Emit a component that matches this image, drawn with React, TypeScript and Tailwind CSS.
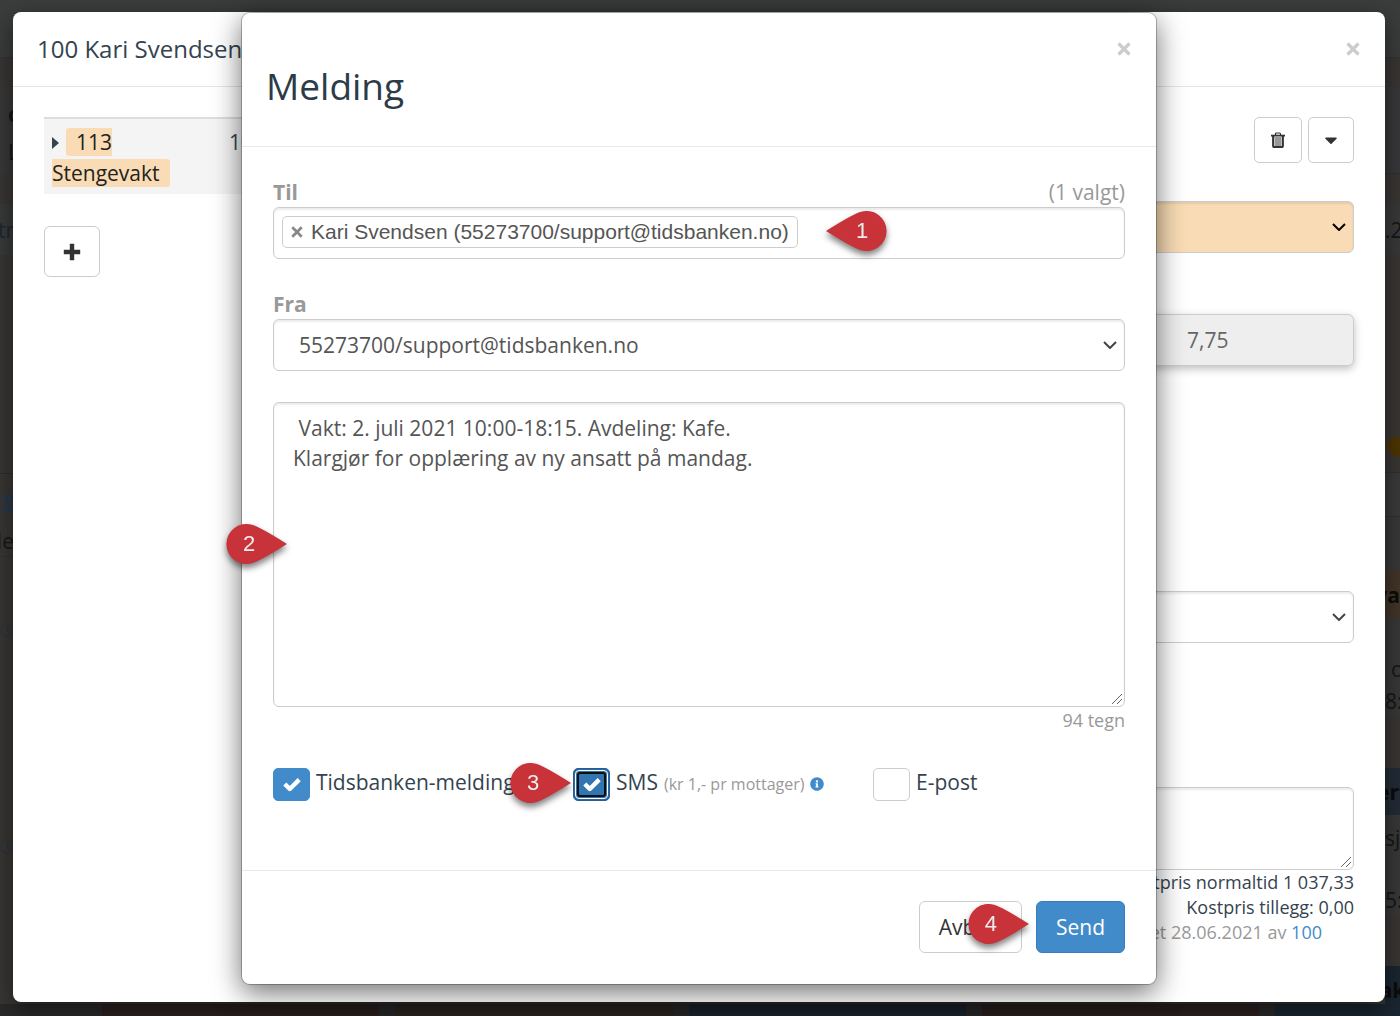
import { useState, type ReactNode } from "react";
import { FaCaretDown, FaInfoCircle, FaRegClock } from "react-icons/fa";

const inputStyle =
  "w-full rounded-md border border-[#ccc] bg-white text-[21px] leading-[30px] text-[#555] shadow-[inset_0_2px_2px_rgba(0,0,0,0.075)] outline-none";

const Chevron = ({ className }: { className: string }) => (
  <svg
    className={`pointer-events-none absolute right-2 top-1/2 h-2 w-3.5 -translate-y-1/2 ${className}`}
    viewBox="0 0 14 8"
    fill="none"
    stroke="currentColor"
    strokeWidth={2}
  >
    <path d="M1 1l6 6 6-6" />
  </svg>
);

const Grip = () => (
  <svg
    className="pointer-events-none absolute bottom-0.5 right-0.5 h-3 w-3"
    viewBox="0 0 12 12"
    fill="none"
    stroke="#666"
    strokeWidth={1}
  >
    <path d="M1 11L11 1M6 11l5-5" />
  </svg>
);

const CrossIcon = ({ className }: { className: string }) => (
  <svg className={className} viewBox="0 0 14 14" stroke="currentColor" strokeWidth={3.2}>
    <path d="M1.500 1.500l11 11M12.500 1.500l-11 11" />
  </svg>
);

const CheckIcon = () => (
  <svg
    className="pointer-events-none absolute inset-0 m-auto h-[15px] w-[18px] text-white"
    viewBox="0 0 18 15"
    fill="none"
    stroke="currentColor"
    strokeWidth={4.4}
    strokeLinejoin="round"
  >
    <path d="M1.800 7l5 5L16.200 2.600" />
  </svg>
);

const PlusIcon = () => (
  <svg className="h-[18px] w-[18px]" viewBox="0 0 18 18" stroke="currentColor" strokeWidth={4.4}>
    <path d="M9 .8v16.400M.8 9h16.400" strokeLinejoin="round" />
  </svg>
);

const TrashIcon = () => (
  <svg className="h-4 w-3.5" viewBox="0 0 14 16" fill="none" stroke="currentColor">
    <path d="M4.500 3V2q0-1 1-1h3q1 0 1 1v1" strokeWidth={1.2} />
    <path d="M0 3.600h14" strokeWidth={1.8} />
    <path d="M2.200 4v10q0 1 1 1h7.600q1 0 1-1V4" strokeWidth={2.2} />
    <path d="M5 5v9M7 5v9M9 5v9" strokeWidth={1} />
  </svg>
);

type PinProps = { label: string; direction: "left" | "right"; className: string };

// Numbered marker pointing at a field
const Pin = ({ label, direction, className }: PinProps) => (
  <span
    className={`pointer-events-none absolute z-10 flex h-10 w-[62px] items-center drop-shadow-[0_4px_3px_rgba(0,0,0,0.5)] ${className}`}
  >
    <svg className="absolute inset-0 h-full w-full" viewBox="0 0 62 40" fill="#c83239">
      {direction === "left" ? (
        <path d="M0 20Q27 3 35 0.8A20 20 0 1 1 35 39.2Q27 37 0 20z" />
      ) : (
        <path d="M62 20Q35 3 27 0.8A20 20 0 1 0 27 39.2Q35 37 62 20z" />
      )}
    </svg>
    <span
      className={`relative w-12 text-center font-['Liberation_Sans',sans-serif] text-[22px] leading-6 font-normal text-[#eee] ${
        direction === "left" ? "ml-3" : ""
      }`}
    >
      {label}
    </span>
  </span>
);

type CheckProps = {
  id: string;
  label: string;
  initial?: boolean;
  focused?: boolean;
  children?: ReactNode;
};

const CheckOption = ({ id, label, initial = false, focused = false, children }: CheckProps) => {
  const [checked, setChecked] = useState(initial);
  const box = !checked
    ? "border-[#ccc] bg-white"
    : focused
      ? "border-[#285e8e] bg-[#3276b1] ring-2 ring-[#2b68a5] ring-inset"
      : "border-[#428bca] bg-[#428bca]";

  return (
    <div className="relative flex items-center gap-1.5 whitespace-nowrap">
      <span className="relative flex h-[33px] w-[37px] shrink-0">
        <input
          id={id}
          type="checkbox"
          checked={checked}
          onChange={(e) => setChecked(e.target.checked)}
          className={`h-full w-full appearance-none rounded-[5px] border outline-none ${box}`}
        />
        {focused && (
          <span className="pointer-events-none absolute inset-[2px] rounded-[4px] border border-white p-px">
            <span className="block h-full w-full rounded-[3px] border-2 border-[#101010]" />
          </span>
        )}
        {checked && <CheckIcon />}
      </span>
      <label htmlFor={id} className="pb-1 text-[21px] leading-[30px] text-[#34434f]">
        {label}
      </label>
      {children}
    </div>
  );
};

// Dimmed schedule behind the dialogs
const Backdrop = () => (
  <div
    aria-hidden="true"
    className="absolute inset-0 flex flex-col overflow-hidden bg-[#393634] text-[21px] leading-[30px] text-[#161616]"
  >
    <div className="h-[58px] shrink-0 border-b border-[#333] bg-[#3a3d3b]" />
    <div className="flex min-h-0 flex-1 justify-between">
      <div className="flex w-3.5 flex-col items-end overflow-hidden">
        <div className="mt-[29px] flex h-[87px] w-full shrink-0 flex-col items-start gap-2 bg-[#393838] pl-2 pt-3">
          <b>c</b>
          <span>L</span>
        </div>
        <div className="mt-[30px] flex h-[51px] w-full shrink-0 items-center justify-end bg-[#393a3a] text-[#1a2733]">
          tr
        </div>
        <div className="mt-[218px] flex w-full shrink-0 justify-end border-t border-[#2f2d2c] pt-2.5 text-[#1b3b58]">
          g
        </div>
        <div className="mt-3 flex w-full shrink-0 justify-end border-b border-[#343230]">de</div>
        <FaRegClock className="mt-[66px] h-3.5 w-3.5 shrink-0 text-[#2d353b]" />
        <FaRegClock className="mt-[203px] h-3.5 w-3.5 shrink-0 text-[#2d353b]" />
      </div>
      <div className="flex w-[15px] flex-col overflow-hidden">
        <div className="mt-[29px] h-[87px] shrink-0 border-b border-[#303030] bg-[#38383a]" />
        <div className="mt-[30px] flex h-[51px] shrink-0 items-center bg-[#39393a]">.2</div>
        <svg className="mt-[179px] h-6 w-6 shrink-0" viewBox="0 0 24 24" fill="#4c3500">
          <path d="M12 0l2 4 4-2.500.5 4.500 4.500.5L20.500 11 24 14l-4 1.500 1 4.500-4.500-.5L14 24l-3-3.500L7 23l-.5-4.500L2 17l2.500-3.500L0 11l4.500-2L3 4.500l4.500.5z" />
        </svg>
        <div className="mt-[14px] h-[45px] shrink-0 border-y border-[#303030] bg-[#3a3a3a]" />
        <div className="h-[54px] shrink-0 bg-[#383838]" />
        <div className="flex h-[47px] shrink-0 items-center justify-end bg-[#423528] font-bold text-[#0c0c0c]">
          va
        </div>
        <div className="flex h-[100px] shrink-0 flex-col bg-[#383838] pt-9">
          <span className="ml-1.5 h-8 shrink-0">o</span>
          <span>8:</span>
        </div>
        <div className="mt-[50px] flex h-[47px] shrink-0 items-center justify-center bg-[#222c36] font-bold text-[#0c0c0c]">
          ert
        </div>
        <div className="flex h-[100px] shrink-0 flex-col bg-[#383838] pt-2">
          <span className="h-[62px] shrink-0">sj</span>
          <span>5:</span>
        </div>
        <div className="mt-[51px] flex h-[47px] shrink-0 items-center justify-center bg-[#1a2631] font-bold text-[#0c0c0c]">
          ak
        </div>
      </div>
    </div>
    <div className="flex h-3 shrink-0 gap-4 bg-[#292a29] pl-[102px]">
      <div className="flex-1 bg-[#2c2120]" />
      <div className="flex-1 bg-[#2d261f]" />
      <div className="flex-1 bg-[#1b2530]" />
      <div className="flex-1 bg-[#2c2120]" />
      <div className="w-[125px] bg-[#1a2631]" />
    </div>
  </div>
);

const ShiftDialog = () => (
  <section className="flex flex-col rounded-lg bg-white shadow-[0_8px_23px_rgba(0,0,0,0.5)] [grid-area:1/1]">
    <header className="flex h-[75px] items-center justify-between border-b border-[#e5e5e5] pl-6 pr-[25px]">
      <h2 className="text-[24px] leading-9 text-[#34434f]">100 Kari Svendsen</h2>
      <button type="button" aria-label="Lukk vakt" className="text-[#ccc]">
        <CrossIcon className="h-3.5 w-3.5" />
      </button>
    </header>
    <div className="flex justify-between px-[31px] pt-[30px]">
      <div className="w-[300px]">
        <div className="flex border-t-2 border-[#ddd] bg-[#f4f4f4] px-2 pb-[5px] pt-2 text-[21px] leading-[31px] text-[#34434f]">
          <div className="w-[177px] shrink-0">
            <svg className="mr-1.5 inline h-3 w-2 align-[1px]" viewBox="0 0 8 12" fill="currentColor">
              <path d="M0 0l7 6-7 6z" />
            </svg>
            <span className="rounded-[3px] bg-[#f9dcb5] px-2.5 text-[#222]">
              113 <br />
              Stengevakt
            </span>
          </div>
          <span>10:00</span>
        </div>
        <button
          type="button"
          aria-label="Legg til"
          className="mt-8 flex h-[51px] w-14 items-center justify-center rounded-md border border-[#ccc] text-[#333]"
        >
          <PlusIcon />
        </button>
      </div>
      <div className="flex w-[300px] flex-col">
        <div className="flex justify-end gap-1.5 text-[#333]">
          <button
            type="button"
            aria-label="Slett"
            className="flex h-[46px] w-12 items-center justify-center rounded-[5px] border border-[#ccc]"
          >
            <TrashIcon />
          </button>
          <button
            type="button"
            aria-label="Flere valg"
            className="flex h-[46px] w-[46px] items-center justify-center rounded-[5px] border border-[#ccc]"
          >
            <FaCaretDown className="h-5 w-5" />
          </button>
        </div>
        <div className="relative mt-[38px]">
          <select
            aria-label="Vakttype"
            className="h-[52px] w-full appearance-none rounded-md border border-[#ccc] bg-[#f9dcb5] shadow-[inset_0_2px_2px_rgba(0,0,0,0.075)]"
          />
          <Chevron className="text-black" />
        </div>
        <input
          aria-label="Timer"
          readOnly
          value="7,75"
          className="mt-[61px] h-[52px] w-full rounded-md border border-[#ccc] bg-[#eee] pl-[132px] text-[21px] text-[#666] shadow-[0_3px_8px_rgba(0,0,0,0.25)] outline-none"
        />
        <div className="relative mt-[225px]">
          <select aria-label="Avdeling" className={`h-[52px] appearance-none ${inputStyle}`} />
          <Chevron className="text-[#444]" />
        </div>
        <div className="relative mt-[144px] flex">
          <textarea aria-label="Kommentar" className={`h-[83px] resize-none ${inputStyle}`} />
          <Grip />
        </div>
        <div className="text-right text-[18px] leading-[25px] text-[#34434f]">
          <p>Kostpris normaltid 1 037,33</p>
          <p>Kostpris tillegg: 0,00</p>
          <p className="pr-8 text-[#999]">
            Opprettet 28.06.2021 av{" "}
            <a href="#100" className="text-[#428bca]">
              100
            </a>
          </p>
        </div>
      </div>
    </div>
  </section>
);

const MessageDialog = () => {
  const [message, setMessage] = useState(
    " Vakt: 2. juli 2021 10:00-18:15. Avdeling: Kafe.\nKlargjør for opplæring av ny ansatt på mandag."
  );

  return (
    <section
      role="dialog"
      aria-labelledby="melding-title"
      className="relative w-full max-w-[916px] self-start justify-self-center rounded-[9px] border border-black/25 bg-white bg-clip-padding shadow-[0_8px_28px_rgba(0,0,0,0.55)] [grid-area:1/1]"
    >
      <header className="flex items-start justify-between border-b border-[#e9e9e9] pb-[35px] pl-6 pr-[25px] pt-[29px]">
        <h1 id="melding-title" className="pt-[18px] text-[37px] leading-[51px] text-[#2c3b47]">
          Melding
        </h1>
        <button type="button" aria-label="Lukk" className="text-[#ccc]">
          <CrossIcon className="h-3.5 w-3.5" />
        </button>
      </header>

      <div className="px-[31px] pb-[69px] pt-[30px]">
        <div className="flex justify-between text-[21px] leading-[30px] text-[#999]">
          <label htmlFor="til" className="font-bold">
            Til
          </label>
          <span>(1 valgt)</span>
        </div>
        <div className={`relative flex h-[52px] items-start p-2 ${inputStyle}`}>
          <span className="flex h-8 shrink-0 items-center gap-2 rounded-[5px] border border-[#ccc] px-2 font-['Liberation_Sans',sans-serif]">
            <button type="button" aria-label="Fjern Kari Svendsen" className="text-[#888]">
              <CrossIcon className="h-3 w-3" />
            </button>
            Kari Svendsen (55273700/support@tidsbanken.no)
          </span>
          <input id="til" className="min-w-0 flex-1 outline-none" />
          <Pin label="1" direction="left" className="left-[552px] top-[3px]" />
        </div>

        <label
          htmlFor="fra"
          className="mt-[30px] block text-[21px] leading-[30px] font-bold text-[#999]"
        >
          Fra
        </label>
        <div className="relative">
          <select id="fra" className={`h-[52px] appearance-none pl-[25px] ${inputStyle}`}>
            <option>55273700/support@tidsbanken.no</option>
          </select>
          <Chevron className="text-[#444]" />
        </div>

        <div className="relative mt-[31px] flex">
          <textarea
            aria-label="Melding"
            value={message}
            onChange={(e) => setMessage(e.target.value)}
            className={`h-[305px] resize-none px-[19px] py-2.5 ${inputStyle}`}
          />
          <Grip />
          <Pin label="2" direction="right" className="-left-12 top-[122px]" />
        </div>
        <p className="text-right text-[18px] leading-[27px] text-[#999]">94 tegn</p>

        <div className="mt-[33px] grid grid-cols-3 gap-x-12">
          <CheckOption id="tidsbanken" label="Tidsbanken-melding" initial />
          <CheckOption id="sms" label="SMS" initial focused>
            <span className="text-[16px] leading-[30px] text-[#999]">(kr 1,- pr mottager)</span>
            <FaInfoCircle className="h-3.5 w-3.5 shrink-0 text-[#428bca]" />
            <Pin label="3" direction="right" className="-left-16 -top-1" />
          </CheckOption>
          <CheckOption id="epost" label="E-post" />
        </div>
      </div>

      <footer className="flex justify-end gap-3.5 border-t border-[#e9e9e9] px-[31px] pb-[31px] pt-[30px] text-[21px] leading-[30px]">
        <button
          type="button"
          className="h-[52px] rounded-md border border-[#ccc] bg-white px-[19px] text-[#333]"
        >
          Avbryt
        </button>
        <span className="relative">
          <button
            type="button"
            className="h-[52px] rounded-md border border-[#357ebd] bg-[#428bca] px-[19px] text-white"
          >
            Send
          </button>
          <Pin label="4" direction="right" className="-left-[69px] top-[3px]" />
        </span>
      </footer>
    </section>
  );
};

export default function App() {
  return (
    <main className="relative min-h-screen font-['Open_Sans',sans-serif]">
      <Backdrop />
      <div className="relative grid min-h-screen pb-3.5 pl-[13px] pr-[15px] pt-3">
        <ShiftDialog />
        <MessageDialog />
      </div>
    </main>
  );
}
